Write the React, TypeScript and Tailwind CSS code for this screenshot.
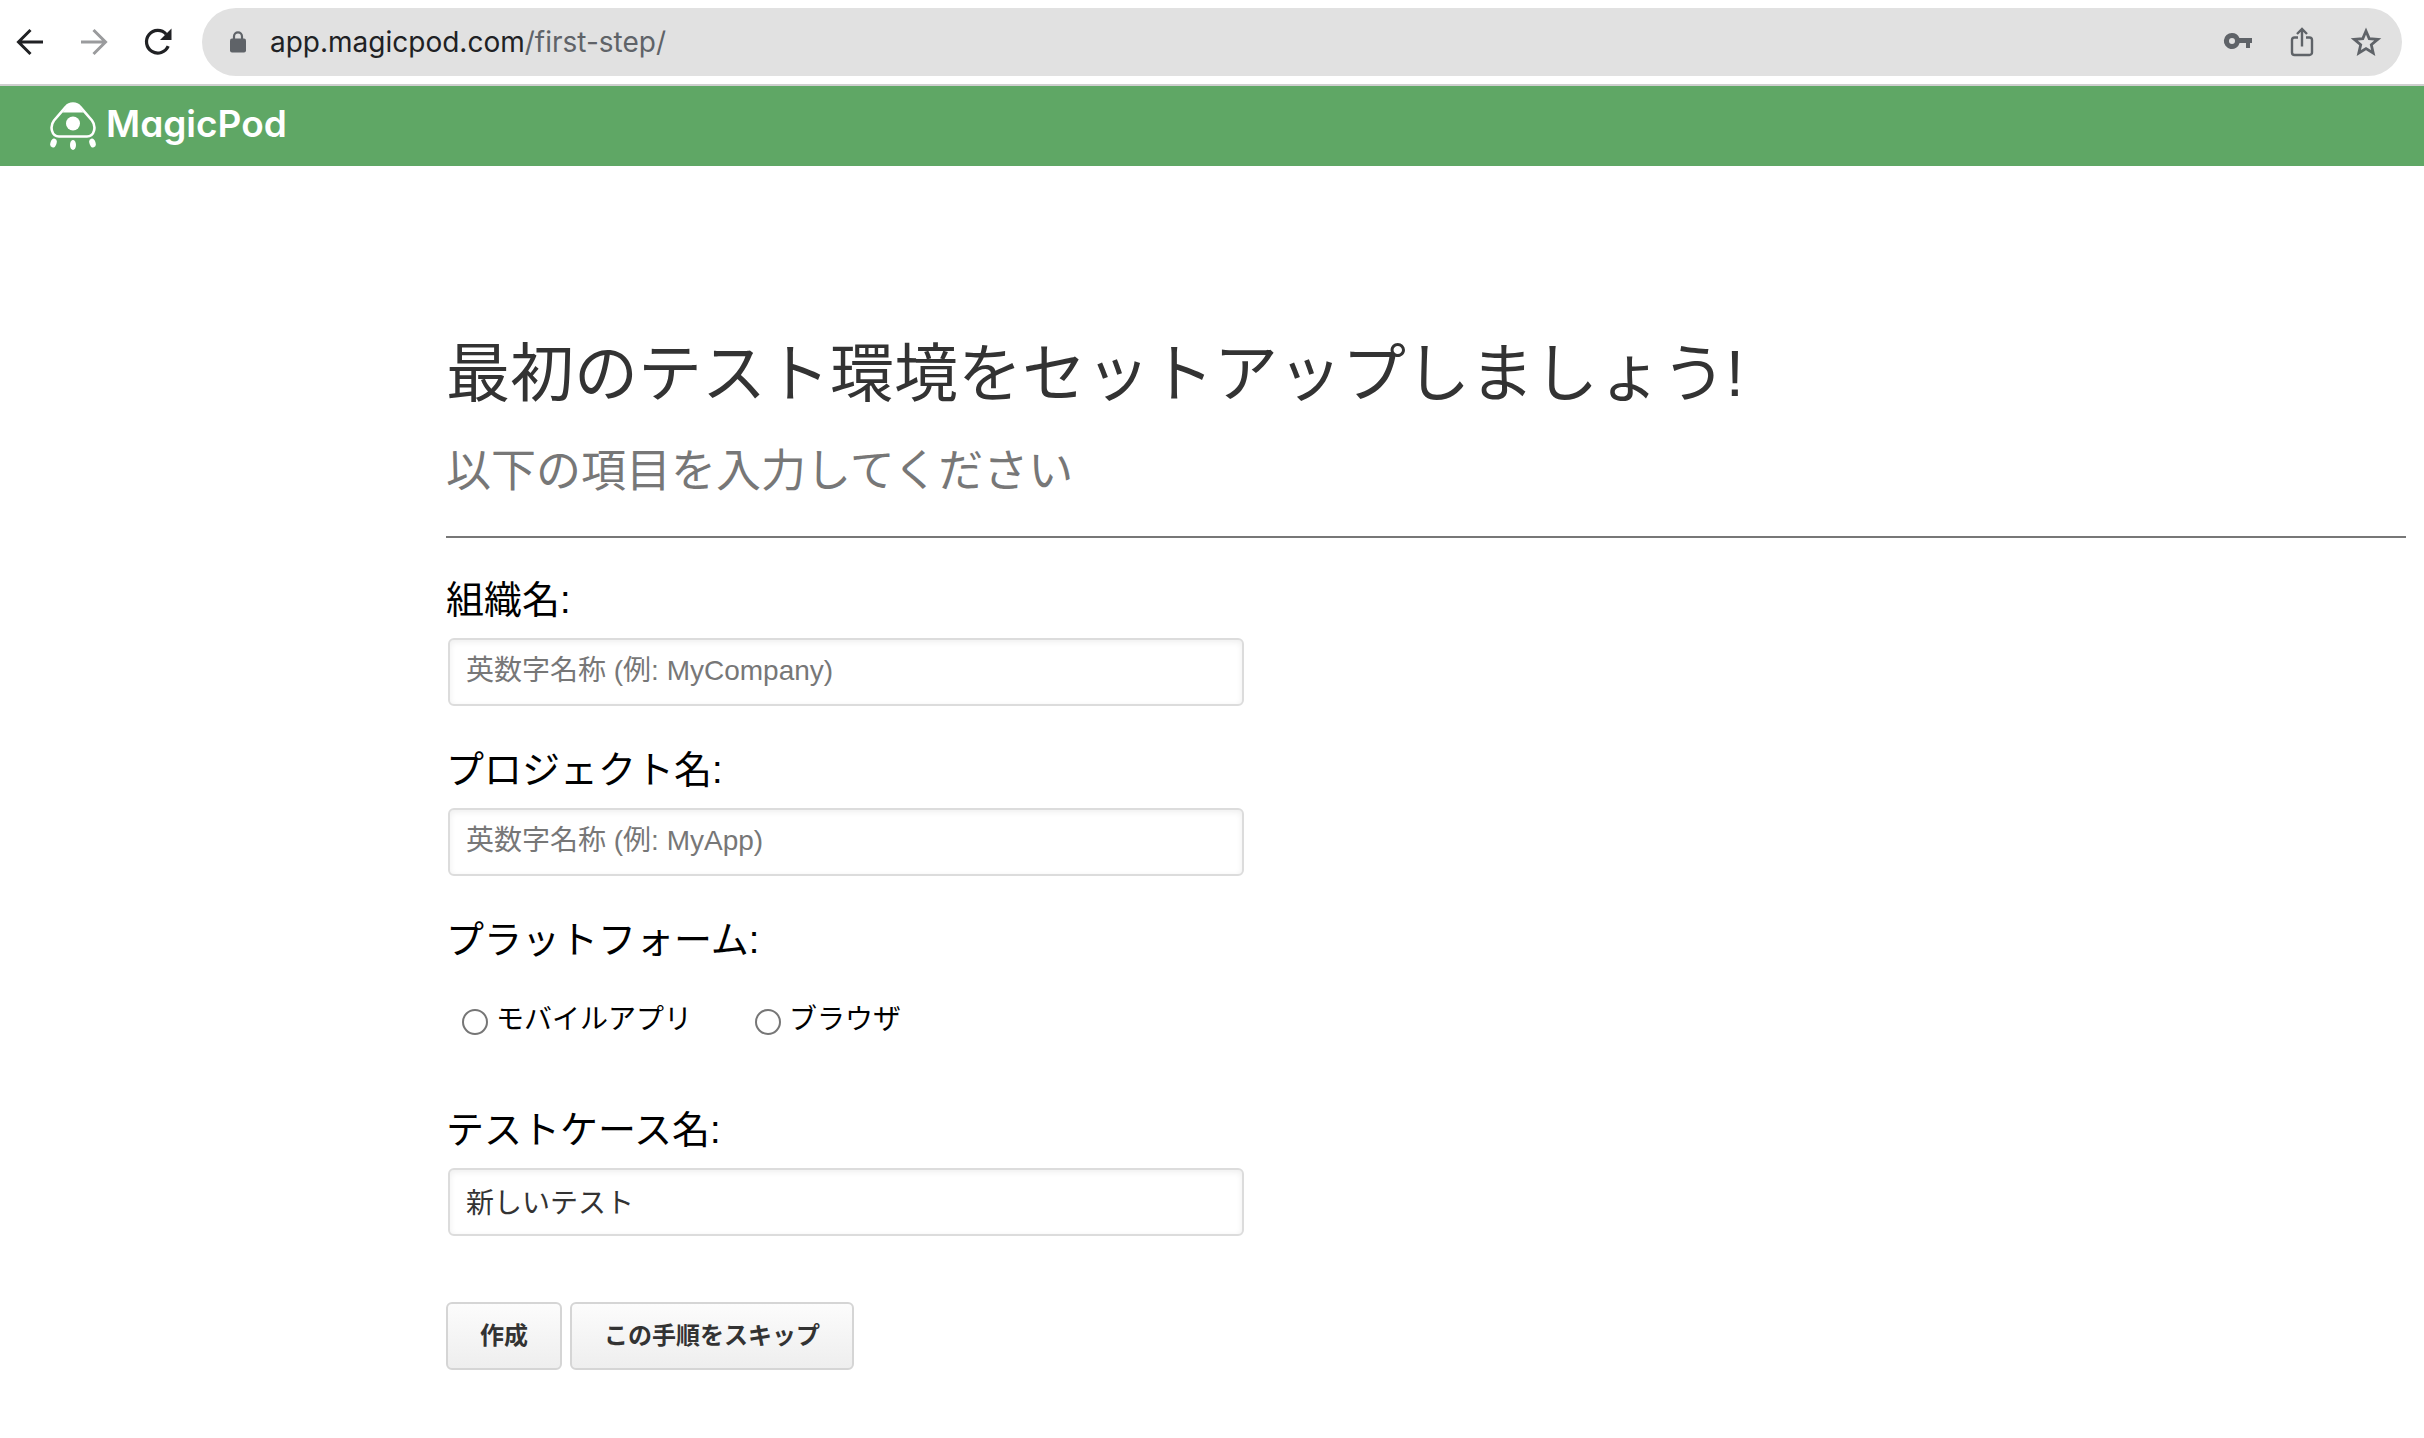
import type { InputHTMLAttributes, ReactNode } from "react";

function IconButton({ label, children }: { label: string; children: ReactNode }) {
  return (
    <button type="button" aria-label={label} className="flex size-8 items-center justify-center">
      {children}
    </button>
  );
}

function BackIcon() {
  return (
    <svg width="32" height="32" viewBox="0 0 32 32" fill="none" stroke="currentColor" strokeWidth="3" aria-hidden="true">
      <path d="M29 16H5M16.5 4L4.5 16l12 12" />
    </svg>
  );
}

function ForwardIcon() {
  return (
    <svg width="32" height="32" viewBox="0 0 32 32" fill="none" stroke="currentColor" strokeWidth="3" aria-hidden="true">
      <path d="M3 16h24M15.5 4l12 12-12 12" />
    </svg>
  );
}

function ReloadIcon() {
  return (
    <svg width="32" height="32" viewBox="0 0 32 32" aria-hidden="true">
      <path d="M26.2 20.2A11.3 11.3 0 1 1 24.2 8.2" fill="none" stroke="currentColor" strokeWidth="3.2" />
      <path d="M29.5 2.5V14H18z" fill="currentColor" />
    </svg>
  );
}

function LockIcon() {
  return (
    <svg width="16" height="22" viewBox="0 0 16 22" aria-hidden="true" className="shrink-0">
      <path d="M4 9V5.4a4 4 0 0 1 8 0V9" fill="none" stroke="#5f6368" strokeWidth="2.2" />
      <rect x="0" y="7.5" width="16" height="14" rx="2" fill="#5f6368" />
    </svg>
  );
}

function KeyIcon() {
  return (
    <svg width="32" height="32" viewBox="0 0 32 32" aria-hidden="true">
      <path
        fill="currentColor"
        fillRule="evenodd"
        d="M10 7a8 8 0 0 1 7.4 5H30v5h-2v5h-4v-5h-6.4A8 8 0 1 1 10 7zm0 5a3 3 0 1 0 0 6 3 3 0 0 0 0-6z"
      />
    </svg>
  );
}

function ShareIcon() {
  return (
    <svg width="32" height="32" viewBox="0 0 32 32" fill="none" stroke="currentColor" strokeWidth="2.4" aria-hidden="true">
      <path d="M12 11.5H8.6A2.6 2.6 0 0 0 6 14.1v12.3A2.6 2.6 0 0 0 8.6 29h14.8a2.6 2.6 0 0 0 2.6-2.6V14.1a2.6 2.6 0 0 0-2.600-2.600H20" />
      <path d="M16 20.500V3.500M11 8l5-5 5 5" />
    </svg>
  );
}

function StarIcon() {
  return (
    <svg width="32" height="32" viewBox="0 0 32 32" fill="none" stroke="currentColor" strokeWidth="2.8" aria-hidden="true">
      <path d="M16 5l3.200 7.600 8.600.700-6.500 5.500 1.900 8.200-7.200-4.400-7.200 4.400 1.900-8.200-6.500-5.500 8.600-.700z" />
    </svg>
  );
}

function PodLogo() {
  return (
    <svg width="46" height="48" viewBox="0 0 46 48" aria-hidden="true">
      <path
        d="M23 1.500c-3 0-5.300 1-7 3.200L4 18.500c-4.500 6-2.500 16 5 16h28c7.500 0 9.500-10 5-16L30 4.700c-1.700-2.200-4-3.200-7-3.200z"
        fill="none"
        stroke="#fff"
        strokeWidth="2.600"
      />
      <path d="M12.500 10.500h21l-4-5C27.800 2.500 26 1 23 1s-4.800 1.500-6.500 4.500z" fill="#fff" />
      <circle cx="23" cy="21.500" r="7" fill="#fff" />
      <ellipse cx="3.500" cy="41" rx="3" ry="4.600" transform="rotate(18 3.500 41)" fill="#fff" />
      <ellipse cx="23" cy="43" rx="3" ry="5" fill="#fff" />
      <ellipse cx="42.500" cy="41" rx="3" ry="4.600" transform="rotate(-18 42.500 41)" fill="#fff" />
    </svg>
  );
}

function Field({ id, label, ...input }: { id: string; label: string } & InputHTMLAttributes<HTMLInputElement>) {
  return (
    <div className="mb-[34px] flex flex-col gap-2">
      <label htmlFor={id} className="text-[38px] leading-[60px] text-black">
        {label}
      </label>
      <input
        id={id}
        type="text"
        className="ml-[2px] h-[68px] w-full max-w-[796px] rounded-md border-2 border-[#dcdcdc] bg-white px-4 pb-[2px] text-[28px] text-[#333] shadow-[inset_0_2px_6px_rgba(0,0,0,0.07)] placeholder:text-[#777]"
        {...input}
      />
    </div>
  );
}

function PlatformOption({ value, children }: { value: string; children: ReactNode }) {
  return (
    <label className="flex items-center gap-2 text-[28px] leading-[48px] text-black">
      <input
        type="radio"
        name="platform"
        value={value}
        className="mt-1 size-[26px] appearance-none rounded-full border-2 border-[#767676] bg-white checked:border-8 checked:border-[#1a73e8]"
      />
      {children}
    </label>
  );
}

const buttonClass =
  "h-[68px] rounded-md border-2 border-[#d5d5d5] bg-linear-to-b from-[#fcfcfc] to-[#eeeeee] text-[24px] font-bold text-[#333]";

export default function App() {
  return (
    <div className="min-h-screen bg-white font-['Liberation_Sans','Noto_Sans_CJK_JP',sans-serif]">
      <div className="flex h-[86px] items-center border-b-2 border-[#cfcfcf] pr-[22px] pl-[14px]">
        <nav aria-label="ブラウザ" className="mr-7 flex items-center gap-8 text-[#202124]">
          <IconButton label="戻る">
            <BackIcon />
          </IconButton>
          <span className="text-[#9a9b9d]">
            <IconButton label="進む">
              <ForwardIcon />
            </IconButton>
          </span>
          <IconButton label="再読み込み">
            <ReloadIcon />
          </IconButton>
        </nav>
        <div className="flex h-[68px] grow items-center rounded-full bg-[#e1e1e1] pr-5 pl-7">
          <LockIcon />
          <a href="#" className="ml-6 font-['Inter',sans-serif] text-[28px] text-[#202124]">
            app.magicpod.com<span className="text-[#5f6368]">/first-step/</span>
          </a>
          <div className="ml-auto flex items-center gap-8 text-[#5f6368]">
            <IconButton label="パスワード">
              <KeyIcon />
            </IconButton>
            <IconButton label="共有">
              <ShareIcon />
            </IconButton>
            <IconButton label="ブックマーク">
              <StarIcon />
            </IconButton>
          </div>
        </div>
      </div>

      <header className="flex h-20 items-center bg-[#5fa765] px-[50px]">
        <a href="#" className="flex items-center gap-[10px] text-white">
          <PodLogo />
          <span className="pb-1 font-['Inter',sans-serif] text-[37px] leading-[44px] font-semibold [font-feature-settings:'cv11']">
            MagicPod
          </span>
        </a>
      </header>

      <main className="pt-[168px] pr-[18px] pl-[446px]">
        <h1 className="text-[64px] leading-[80px] text-[#333]">最初のテスト環境をセットアップしましょう!</h1>
        <p className="mt-7 text-[45px] leading-[60px] text-[#777]">以下の項目を入力してください</p>
        <hr className="mt-[34px] mb-8 border-t-2 border-[#777]" />
        <form onSubmit={(event) => event.preventDefault()}>
          <Field id="organization" label="組織名:" placeholder="英数字名称 (例: MyCompany)" />
          <Field id="project" label="プロジェクト名:" placeholder="英数字名称 (例: MyApp)" />
          <fieldset className="mb-14">
            <legend className="text-[38px] leading-[60px] text-black">プラットフォーム:</legend>
            <div className="mt-[26px] flex gap-[63px] pl-4">
              <PlatformOption value="mobile">モバイルアプリ</PlatformOption>
              <PlatformOption value="browser">ブラウザ</PlatformOption>
            </div>
          </fieldset>
          <Field id="test-case" label="テストケース名:" defaultValue="新しいテスト" />
          <div className="mt-[66px] flex gap-2">
            <button type="submit" className={`${buttonClass} px-8`}>
              作成
            </button>
            <button type="button" className={`${buttonClass} px-8`}>
              この手順をスキップ
            </button>
          </div>
        </form>
      </main>
    </div>
  );
}
